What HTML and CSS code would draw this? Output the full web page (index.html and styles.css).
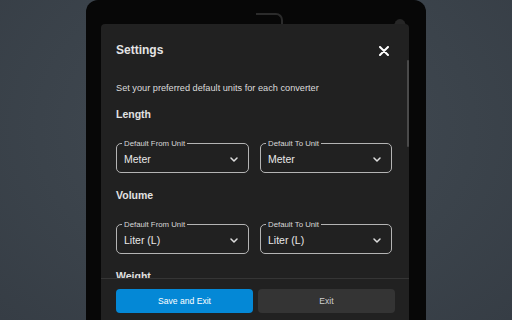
FILE: index.html
```html
<!DOCTYPE html>
<html>
<head>
<meta charset="utf-8">
<link rel="stylesheet" href="styles.css">
</head>
<body>
<div class="frame">
  <div class="notch"></div>
  <div class="bump"></div>
  <div class="dialog">
    <div class="thumb"></div>
    <div class="content">
      <div class="header">
        <h2 class="title">Settings</h2>
        <svg class="close" width="10" height="10" viewBox="0 0 10 10"><path d="M1 1L9 9M9 1L1 9" stroke="#fff" stroke-width="2" stroke-linecap="round"/></svg>
      </div>
      <p class="desc">Set your preferred default units for each converter</p>

      <h3 class="section">Length</h3>
      <div class="row">
        <div class="select"><span class="label">Default From Unit</span><span class="value">Meter</span><svg class="chev" width="8" height="5" viewBox="0 0 8 5"><path d="M1 1L4 4L7 1" fill="none" stroke="#ddd" stroke-width="1.5" stroke-linecap="round" stroke-linejoin="round"/></svg></div>
        <div class="select"><span class="label">Default To Unit</span><span class="value">Meter</span><svg class="chev" width="8" height="5" viewBox="0 0 8 5"><path d="M1 1L4 4L7 1" fill="none" stroke="#ddd" stroke-width="1.5" stroke-linecap="round" stroke-linejoin="round"/></svg></div>
      </div>

      <h3 class="section">Volume</h3>
      <div class="row">
        <div class="select"><span class="label">Default From Unit</span><span class="value">Liter (L)</span><svg class="chev" width="8" height="5" viewBox="0 0 8 5"><path d="M1 1L4 4L7 1" fill="none" stroke="#ddd" stroke-width="1.5" stroke-linecap="round" stroke-linejoin="round"/></svg></div>
        <div class="select"><span class="label">Default To Unit</span><span class="value">Liter (L)</span><svg class="chev" width="8" height="5" viewBox="0 0 8 5"><path d="M1 1L4 4L7 1" fill="none" stroke="#ddd" stroke-width="1.5" stroke-linecap="round" stroke-linejoin="round"/></svg></div>
      </div>

      <h3 class="section">Weight</h3>
    </div>
    <div class="footer">
      <button class="btn primary">Save and Exit</button>
      <button class="btn secondary">Exit</button>
    </div>
  </div>
</div>
</body>
</html>
```
FILE: styles.css
```css
html, body {
  margin: 0;
  padding: 0;
}
body {
  width: 512px;
  height: 320px;
  overflow: hidden;
  background: radial-gradient(ellipse at 50% 40%, #434b54 0%, #3b434b 60%, #363d45 100%);
  font-family: "Liberation Sans", Arial, sans-serif;
}
.frame {
  position: relative;
  margin-left: 86px;
  width: 340px;
  height: 320px;
  box-sizing: border-box;
  padding: 24px 17px 0 15px;
  background: #070707;
  border-radius: 12px 12px 0 0;
  display: flex;
  flex-direction: column;
}
.notch {
  position: absolute;
  left: 170px;
  top: 13px;
  width: 25px;
  height: 20px;
  border-top: 2px solid #2b2b2b;
  border-right: 2px solid #2b2b2b;
  border-top-right-radius: 7px;
}
.bump {
  position: absolute;
  left: 308px;
  top: 19px;
  width: 12px;
  height: 8px;
  background: #262626;
  border-radius: 50% 50% 0 0 / 100% 100% 0 0;
}
.dialog {
  position: relative;
  flex: 1;
  display: flex;
  flex-direction: column;
  background: #212121;
  border-radius: 4px 4px 0 0;
  min-height: 0;
}
.thumb {
  position: absolute;
  right: 0;
  top: 36px;
  width: 2px;
  height: 87px;
  background: #4a4a4a;
  border-radius: 1px;
}
.content {
  flex: 1;
  min-height: 0;
  overflow: hidden;
  padding: 18px 14px 0 15px;
  color: #e2e2e2;
}
.header {
  display: flex;
  align-items: center;
  justify-content: space-between;
}
.title {
  margin: 0;
  font-size: 12px;
  line-height: 17px;
  font-weight: bold;
  color: #e4e4e4;
}
.close {
  display: block;
  margin-right: 6px;
}
.desc {
  margin: 23px 0 0 0;
  font-size: 9.2px;
  line-height: 12px;
  color: #dcdcdc;
}
.section {
  margin: 13px 0 0 0;
  font-size: 10.5px;
  line-height: 14px;
  font-weight: bold;
  color: #e2e2e2;
}
.row + .section {
  margin-top: 15px;
}
.row {
  margin-top: 22px;
  display: grid;
  grid-template-columns: 133px 132px;
  column-gap: 11px;
}
.select {
  position: relative;
  height: 30px;
  box-sizing: border-box;
  border: 1px solid #b4b4b4;
  border-radius: 5px;
  display: flex;
  align-items: center;
  justify-content: space-between;
  padding: 2px 10px 0 7px;
}
.label {
  position: absolute;
  left: 5px;
  top: -5px;
  padding: 0 2px;
  background: #212121;
  font-size: 7.8px;
  line-height: 9px;
  color: #d8d8d8;
}
.value {
  font-size: 10.5px;
  line-height: 14px;
  color: #e8e8e8;
}
.chev {
  display: block;
}
.footer {
  border-top: 1px solid #353535;
  padding: 10px 14px 7px 15px;
  display: flex;
  gap: 5px;
}
.btn {
  flex: 1;
  height: 24px;
  border: none;
  border-radius: 4px;
  font-family: "Liberation Sans", Arial, sans-serif;
  font-size: 8.6px;
  padding: 0;
}
.primary {
  background: #0488d6;
  color: #ffffff;
}
.secondary {
  background: #343434;
  color: #cfcfcf;
}
```
